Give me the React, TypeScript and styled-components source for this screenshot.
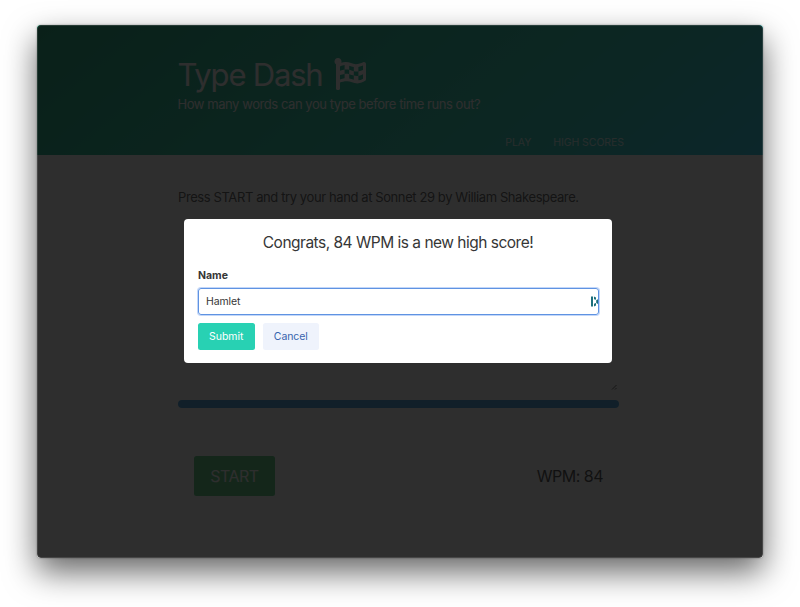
import React from "react";
import styled, { createGlobalStyle } from "styled-components";
import { FaFlagCheckered } from "react-icons/fa";

const GlobalStyle = createGlobalStyle`
  * { box-sizing: border-box; }
  html, body { margin: 0; padding: 0; background: #fff; }
  body { font-family: Inter, "Liberation Sans", sans-serif; color: #363636; overflow: hidden; }
`;

const Desktop = styled.div`
  width: 800px;
  height: 607px;
  padding: 25px 37px 49px;
  background: #fff;
`;

const AppWindow = styled.div`
  position: relative;
  height: 533px;
  border-radius: 4px;
  overflow: hidden;
  background: #fff;
`;

const WindowShadow = styled.div`
  border-radius: 4px;
  box-shadow: 0 14px 32px rgba(0, 0, 0, 0.6), 0 0 2px rgba(0, 0, 0, 0.4);
`;

const Line = styled.span<{ $size: number; $spacing?: number; $weight?: number }>`
  display: block;
  white-space: nowrap;
  font-size: ${(p) => p.$size}px;
  letter-spacing: ${(p) => p.$spacing ?? 0}px;
  font-weight: ${(p) => p.$weight ?? 400};
`;

const Hero = styled.header`
  height: 130px;
  padding: 31px 139px 0 140.5px;
  display: flex;
  flex-direction: column;
  color: #fff;
  background: linear-gradient(141deg, #009e6c 0%, #0cc09a 50%, #14c6b4 75%, #14c6e2 100%);
`;

const Title = styled.h1`
  margin: 0;
  height: 38px;
  line-height: 38px;
  display: flex;
  align-items: center;
  gap: 12px;
  svg { margin-top: -2px; }
`;

const Subtitle = styled.p`
  margin: 0;
  height: 20px;
  line-height: 20px;
`;

const Nav = styled.nav`
  margin-top: 21px;
  display: flex;
  justify-content: flex-end;
  gap: 22px;
  line-height: 16px;
  color: rgba(255, 255, 255, 0.8);
`;

const Content = styled.main`
  padding: 32px 144px 0 141px;
`;

const Prompt = styled.p`
  margin: 0;
  height: 20px;
  line-height: 20px;
  color: #4a4a4a;
`;

const TypingBox = styled.div`
  height: 177px;
  margin-top: 7px;
  padding-right: 1px;
  display: flex;
  align-items: flex-end;
  justify-content: flex-end;
`;

const Progress = styled.div`
  height: 8px;
  margin-top: 9px;
  border-radius: 4px;
  background: #3298dc;
`;

const Controls = styled.div`
  display: flex;
  justify-content: space-between;
  align-items: center;
  height: 40px;
  margin-top: 48px;
  padding: 0 16px;
`;

const StartButton = styled.button`
  width: 81px;
  height: 40px;
  padding: 0;
  border: 0;
  border-radius: 2.5px;
  display: flex;
  align-items: center;
  justify-content: center;
  font-family: inherit;
  color: #fff;
  background: #48c774;
`;

const Overlay = styled.div`
  position: absolute;
  inset: 0;
  padding: 194px 151px 0 147px;
  background: rgba(12, 12, 12, 0.86);
  box-shadow: inset 0 0 0 1px rgba(255, 255, 255, 0.12);
  border-radius: 4px;
`;

const Dialog = styled.form`
  height: 144px;
  padding: 14px 13px 0 14px;
  border-radius: 4px;
  background: #fff;
`;

const DialogTitle = styled.div`
  display: flex;
  justify-content: center;
  padding-right: 1px;
  line-height: 20px;
`;

const Label = styled.label`
  display: block;
  margin-top: 14px;
  height: 18px;
  line-height: 18px;
`;

const Field = styled.div`
  display: flex;
  align-items: center;
  justify-content: space-between;
  height: 27px;
  margin-top: 3px;
  padding: 0 0 0 7px;
  border: 1px solid #5f93e2;
  border-radius: 3px;
  box-shadow: 0 0 0 1px rgba(72, 133, 237, 0.33);
`;

const Buttons = styled.div`
  display: flex;
  gap: 8px;
  margin-top: 8px;
`;

const ActionButton = styled.button<{ $primary?: boolean }>`
  width: 56.5px;
  height: 27px;
  padding: 0;
  border: 0;
  border-radius: 2.5px;
  display: flex;
  align-items: center;
  justify-content: center;
  font-family: inherit;
  color: ${(p) => (p.$primary ? "#fff" : "#3763ae")};
  background: ${(p) => (p.$primary ? "#28d1b3" : "#eff3fc")};
`;

const ResizeGrip = () => (
  <svg width="7" height="7" viewBox="0 0 7 7" fill="none" stroke="#222" strokeWidth="0.8">
    <path d="M1 5.5L5.5 1M4 5.5L5.5 4" />
  </svg>
);

const PasswordMark = () => (
  <svg width="7" height="11" viewBox="0 0 7 11" fill="#1b6f7c">
    <path d="M0 .5h2v10H0zM3 .5l2 1v2.3L3 3.2zM3 7.7l2-.7v2.5L3 10.5zM5.2 4.2L7 3.3v4.8L5.2 7z" />
  </svg>
);

export default function App() {
  return (
    <Desktop>
      <GlobalStyle />
      <WindowShadow>
        <AppWindow>
          <Hero>
            <Title>
              <Line $size={31} $spacing={-1.2} $weight={400}>Type Dash</Line>
              <FaFlagCheckered size={32} />
            </Title>
            <Subtitle>
              <Line $size={13} $spacing={-0.44}>How many words can you type before time runs out?</Line>
            </Subtitle>
            <Nav>
              <Line $size={10.5} $spacing={-0.1}>PLAY</Line>
              <Line $size={10.5} $spacing={-0.06}>HIGH SCORES</Line>
            </Nav>
          </Hero>
          <Content>
            <Prompt>
              <Line $size={13} $spacing={-0.4}>Press START and try your hand at Sonnet 29 by William Shakespeare.</Line>
            </Prompt>
            <TypingBox><ResizeGrip /></TypingBox>
            <Progress />
            <Controls>
              <StartButton type="button"><Line $size={16} $spacing={-0.5}>START</Line></StartButton>
              <Line $size={16} $spacing={-0.5}>WPM: 84</Line>
            </Controls>
          </Content>
          <Overlay>
            <Dialog>
              <DialogTitle>
                <Line $size={15.5} $spacing={-0.5}>Congrats, 84 WPM is a new high score!</Line>
              </DialogTitle>
              <Label><Line $size={10.5} $weight={700}>Name</Line></Label>
              <Field>
                <Line $size={10.5} $spacing={-0.1}>Hamlet</Line>
                <PasswordMark />
              </Field>
              <Buttons>
                <ActionButton type="button" $primary><Line $size={10.5}>Submit</Line></ActionButton>
                <ActionButton type="button"><Line $size={10.5} $spacing={-0.1}>Cancel</Line></ActionButton>
              </Buttons>
            </Dialog>
          </Overlay>
        </AppWindow>
      </WindowShadow>
    </Desktop>
  );
}
